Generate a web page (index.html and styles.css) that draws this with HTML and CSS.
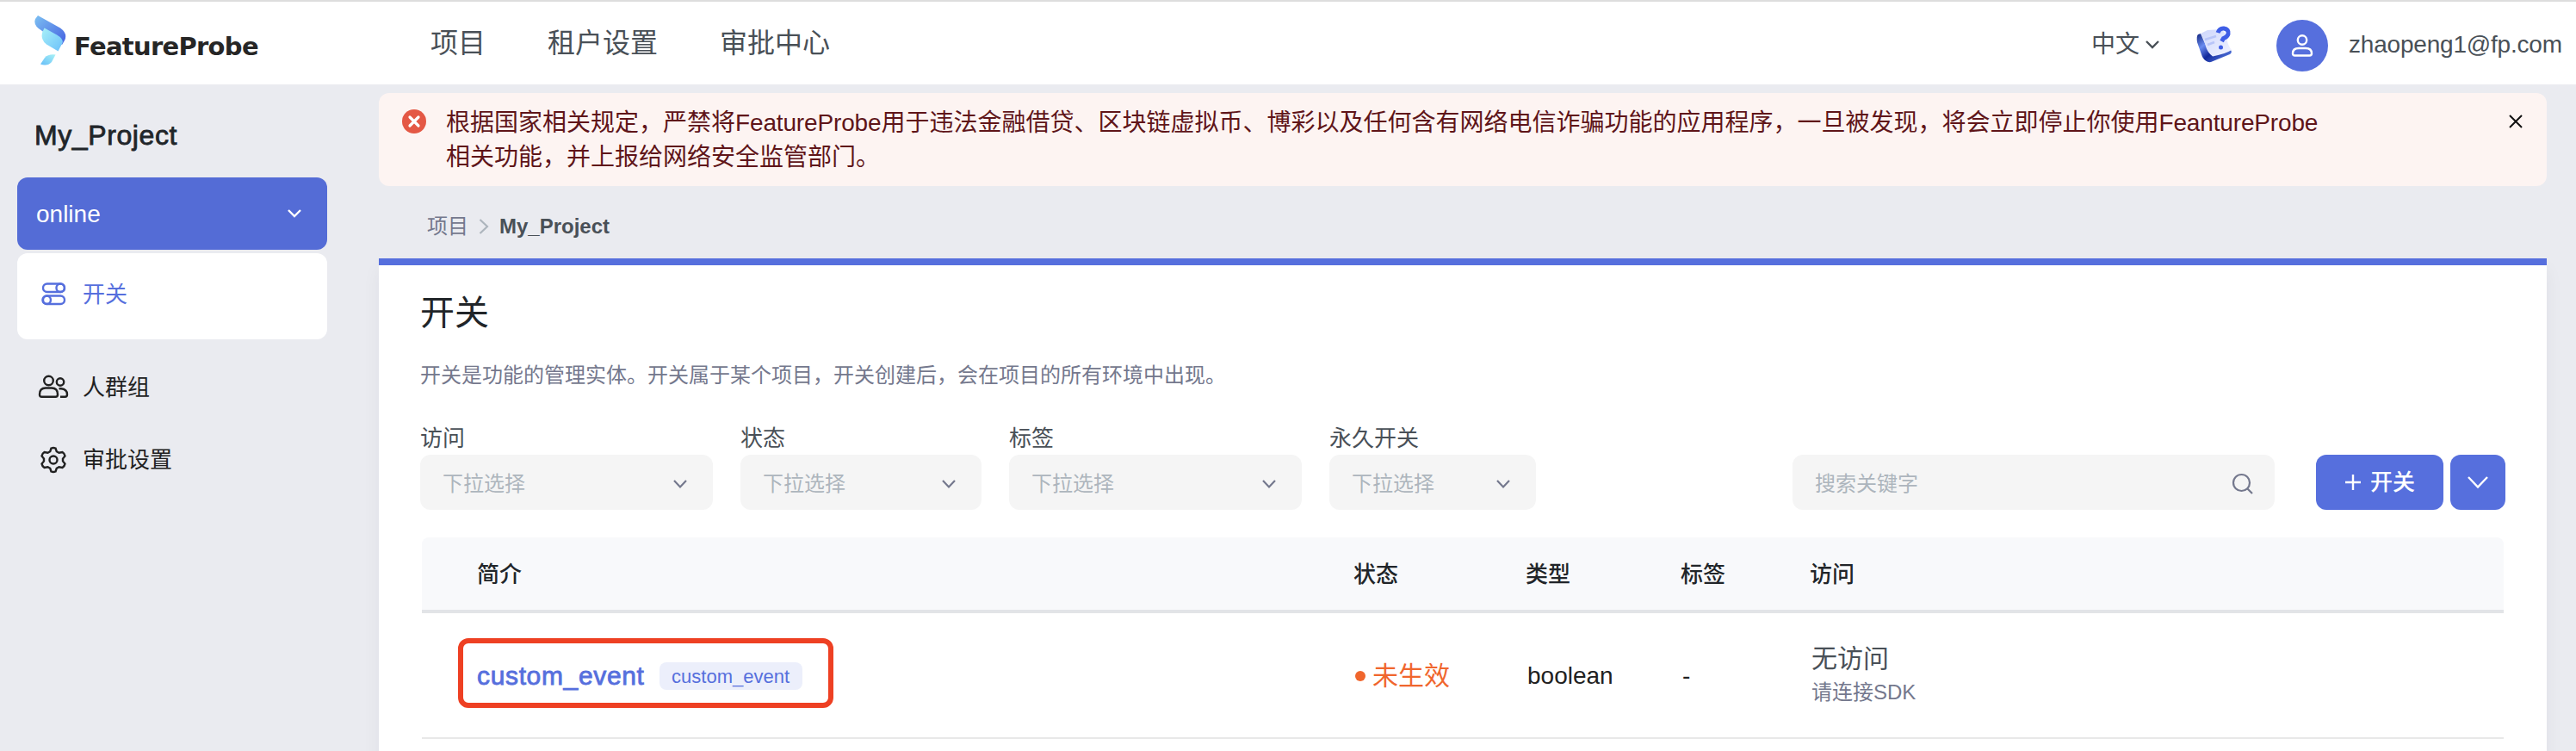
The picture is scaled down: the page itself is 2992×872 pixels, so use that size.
FILE: index.html
```
<!DOCTYPE html>
<html lang="zh-CN">
<head>
<meta charset="utf-8">
<title>FeatureProbe</title>
<link rel="stylesheet" href="styles.css">
</head>
<body>
<header class="header">
  <div class="logo">
    <svg class="logo-mark" width="37" height="60" viewBox="0 0 37 60">
      <defs>
        <linearGradient id="g1" x1="0" y1="0" x2="1" y2="1"><stop offset="0" stop-color="#7cc0f2"/><stop offset="1" stop-color="#4560e0"/></linearGradient>
        <linearGradient id="g2" x1="0" y1="0" x2="1" y2="1"><stop offset="0" stop-color="#a8f0f8"/><stop offset="1" stop-color="#6cc0fa"/></linearGradient>
        <linearGradient id="g3" x1="1" y1="0" x2="0" y2="1"><stop offset="0" stop-color="#a8f2f6"/><stop offset="1" stop-color="#66bdf8"/></linearGradient>
      </defs>
      <path d="M4 1L30 15.500Q39 22 35 30L32 35L9 19Q-2 13 1 5Z" fill="url(#g1)"/>
      <path d="M11.500 15.500L26 23.500Q34 28 32.500 33L27.500 42.500L14 34.500Q7 29 9 21Z" fill="url(#g2)"/>
      <path d="M24.500 46.500Q16 45.500 12 50L7 57.500Q15 60.500 20 55Z" fill="url(#g3)"/>
    </svg>
    <span class="logo-text">FeatureProbe</span>
  </div>
  <nav class="nav"><a>项目</a><a>租户设置</a><a>审批中心</a></nav>
  <div class="account">
    <span class="lang">中文</span>
    <svg class="lang-arrow" width="18" height="11" viewBox="0 0 18 11"><path d="M2 2L9 9L16 2"/></svg>
    <svg class="help" width="48" height="48" viewBox="0 0 48 48">
      <defs>
        <linearGradient id="h1" x1="0" y1="0" x2="1" y2="1"><stop offset="0" stop-color="#cdd6fc"/><stop offset="1" stop-color="#f2f4ff"/></linearGradient>
        <linearGradient id="h2" x1="0" y1="0" x2="1" y2="1"><stop offset="0" stop-color="#10247e"/><stop offset=".3" stop-color="#6a8cf0"/><stop offset=".55" stop-color="#12299a"/><stop offset="1" stop-color="#6a90f5"/></linearGradient>
      </defs>
      <path d="M3 12Q1 14 2 21L8 38Q12 45 18 44L40 35Q43 33 41 30L20 36Q15 33 13 27L6 11Z" fill="url(#h2)"/>
      <path d="M6 11L14 7L30 6Q35 10 36 15Q37 24 42 30Q36 34 20 37.500Q14 33 12 26Q10 17 6 11Z" fill="url(#h1)"/>
      <path d="M11 18L24 14M14 24L22 21" class="help-lines"/>
      <path d="M26 10Q28 4.500 33 5Q39 6 38 11.500Q37 15 32.500 16.500L30.500 20" class="help-q"/>
      <circle cx="29.500" cy="27" r="2.500" fill="#3f5ee6"/>
    </svg>
    <span class="avatar"><svg width="26" height="30" viewBox="0 0 26 30"><circle cx="13" cy="8.500" r="5.200"/><path d="M2 24Q2 18 9 18H17Q24 18 24 24Q24 26.500 21.500 26.500H4.500Q2 26.500 2 24Z"/></svg></span>
    <span class="email">zhaopeng1@fp.com</span>
  </div>
</header>
<div class="layout">
  <aside class="sidebar">
    <h2 class="project">My_Project</h2>
    <div class="env"><span>online</span><svg width="18" height="12" viewBox="0 0 18 12"><path d="M2 2L9 9L16 2"/></svg></div>
    <a class="item active"><svg width="36" height="36" viewBox="0 0 36 36"><rect x="6" y="5.500" width="25" height="9.500" rx="4.750"/><circle cx="26.200" cy="10.250" r="4.750"/><rect x="6" y="19.500" width="25" height="9.500" rx="4.750"/><circle cx="10.200" cy="24.250" r="4.750"/></svg><span>开关</span></a>
    <a class="item group"><svg width="36" height="36" viewBox="0 0 36 36"><circle cx="12.500" cy="10" r="5.300"/><circle cx="26" cy="11.500" r="4.200"/><path d="M2 26Q2 18.500 9 18.500H16Q23 18.500 23 26Q23 28.800 20.500 28.800H4.500Q2 28.800 2 26Z"/><path d="M24.500 19.300H27Q34 20 34 26Q34 28.800 31.500 28.800H26"/></svg><span>人群组</span></a>
    <a class="item approve"><svg width="36" height="36" viewBox="0 0 36 36"><path d="M15.500 4.500Q18 3.500 20.500 4.500L21.800 8.300L24.500 9.800L28.500 9Q31 10.500 31.500 13.500L29 16.600V19.400L31.500 22.500Q31 25.500 28.500 27L24.500 26.200L21.800 27.700L20.500 31.500Q18 32.500 15.500 31.500L14.200 27.700L11.500 26.200L7.500 27Q5 25.500 4.500 22.500L7 19.400V16.600L4.500 13.500Q5 10.500 7.500 9L11.500 9.800L14.200 8.300Z"/><circle cx="18" cy="18" r="4.500"/></svg><span>审批设置</span></a>
  </aside>
  <main class="main">
    <div class="alert">
      <svg class="alert-icon" width="28" height="28" viewBox="0 0 28 28"><circle cx="14" cy="14" r="14" fill="#e45845"/><path d="M9 9L19 19M19 9L9 19" stroke="#fff" stroke-width="3.200" stroke-linecap="round"/></svg>
      <p class="alert-text">根据国家相关规定，严禁将<span>FeatureProbe</span>用于违法金融借贷、区块链虚拟币、博彩以及任何含有网络电信诈骗功能的应用程序，一旦被发现，将会立即停止你使用<span>FeantureProbe</span><br>相关功能，并上报给网络安全监管部门。</p>
      <svg class="close" width="18" height="18" viewBox="0 0 18 18"><path d="M2 2L16 16M16 2L2 16"/></svg>
    </div>
    <div class="crumbs"><span>项目</span><svg width="12" height="20" viewBox="0 0 12 20"><path d="M1.500 2L10 10L1.500 18"/></svg><b>My_Project</b></div>
    <section class="card">
      <h1 class="title">开关</h1>
      <p class="desc">开关是功能的管理实体。开关属于某个项目，开关创建后，会在项目的所有环境中出现。</p>
      <div class="filters">
        <div class="field wide"><label>访问</label><div class="select"><span>下拉选择</span><svg width="18" height="12" viewBox="0 0 18 12"><path d="M2 2L9 9.500L16 2"/></svg></div></div>
        <div class="field mid"><label>状态</label><div class="select"><span>下拉选择</span><svg width="18" height="12" viewBox="0 0 18 12"><path d="M2 2L9 9.500L16 2"/></svg></div></div>
        <div class="field wide"><label>标签</label><div class="select"><span>下拉选择</span><svg width="18" height="12" viewBox="0 0 18 12"><path d="M2 2L9 9.500L16 2"/></svg></div></div>
        <div class="field small"><label>永久开关</label><div class="select"><span>下拉选择</span><svg width="18" height="12" viewBox="0 0 18 12"><path d="M2 2L9 9.500L16 2"/></svg></div></div>
        <div class="search"><span>搜索关键字</span><svg width="26" height="26" viewBox="0 0 26 26"><circle cx="11.500" cy="11.500" r="9.500"/><path d="M18.500 18.500L24 24"/></svg></div>
        <button class="btn add"><svg width="20" height="20" viewBox="0 0 20 20"><path d="M10 1V19M1 10H19"/></svg><span>开关</span></button>
        <button class="btn more"><svg width="26" height="16" viewBox="0 0 26 16"><path d="M2 2L13 13.500L24 2"/></svg></button>
      </div>
      <div class="table">
        <div class="row head"><span>简介</span><span>状态</span><span>类型</span><span>标签</span><span>访问</span></div>
        <div class="row body">
          <div class="name"><a>custom_event</a><span class="tag">custom_event</span><i class="mark"></i></div>
          <div class="status"><i></i><span>未生效</span></div>
          <div class="kind">boolean</div>
          <div class="kind">-</div>
          <div class="visit"><span>无访问</span><small>请连接SDK</small></div>
        </div>
      </div>
    </section>
  </main>
</div>
</body>
</html>
```
FILE: styles.css
```
* { box-sizing: border-box; margin: 0; padding: 0; }
body { width: 2992px; height: 872px; overflow: hidden; background: #eaebf0; color: #212529; font: 28px/40px "Liberation Sans", "Noto Sans CJK SC", sans-serif; }
svg { display: block; flex: none; fill: none; }
span, a, label, b, small { white-space: nowrap; }
.header { display: flex; align-items: flex-start; height: 98px; border-top: 2px solid #ddd; background: #fff; color: #495057; }
.logo { display: flex; width: 500px; padding: 15px 0 0 40px; }
.logo-text { margin: 17px 0 0 9px; font: bold 29px/40px "DejaVu Sans", sans-serif; color: #262626; letter-spacing: -.7px; }
.nav { display: flex; gap: 72px; width: 1929px; padding-top: 24px; font-size: 32px; line-height: 48px; }
.account { display: flex; align-items: center; height: 100px; }
.lang-arrow { margin: -2px 0 0 6px; stroke: #495057; stroke-width: 2.4; }
.help { margin: 0 0 0 41px; }
.help-lines { stroke: #b8c5f8; stroke-width: 2.5; }
.help-q { stroke: #3f5ee6; stroke-width: 5; }
.avatar { display: flex; align-items: center; justify-content: center; width: 60px; height: 60px; margin: 2px 0 0 46px; border-radius: 50%; background: #566fdd; }
.avatar svg { stroke: #fff; stroke-width: 2.4; }
.email { margin-left: 24px; letter-spacing: -.2px; }
.layout { display: flex; height: 774px; }
.sidebar { width: 440px; padding: 0 60px 0 20px; }
.project { height: 108px; padding: 39px 0 0 20px; font-size: 32px; line-height: 40px; font-weight: 400; letter-spacing: .6px; -webkit-text-stroke: .8px #212529; }
.env { display: flex; align-items: center; justify-content: space-between; height: 84px; padding: 2px 29px 0 22px; border-radius: 12px; background: #546cd6; color: #fff; }
.env svg { margin-top: -2px; stroke: #fff; stroke-width: 2.4; }
.item { display: flex; align-items: center; gap: 16px; height: 84px; padding-left: 24px; font-size: 26px; color: #212121; }
.item svg { stroke: #212121; stroke-width: 2.4; }
.active { height: 100px; margin: 4px 0 14px; padding-bottom: 4px; border-radius: 12px; background: #fff; color: #566fdd; }
.active svg { stroke: #566fdd; }
.main { width: 2518px; padding-top: 10px; }
.alert { display: flex; height: 108px; padding: 15px 27px 0 27px; border-radius: 12px; background: #fdf4f2; color: #5f1519; }
.alert-icon { margin: 4px 23px 0 0; }
.alert-text { flex: 1; white-space: nowrap; }
.alert-text span { letter-spacing: -.15px; }
.close { margin-top: 9px; stroke: #111; stroke-width: 2; }
.crumbs { display: flex; align-items: center; height: 84px; padding: 10px 0 0 56px; font-size: 24px; color: #74788d; }
.crumbs svg { margin: 0 12px 0 12px; stroke: #adb5bd; stroke-width: 2.2; }
.crumbs b { color: #495057; }
.card { height: 600px; padding: 0 48px; border-top: 8px solid #566fdd; background: #fff; box-shadow: 0 12px 20px rgba(18, 38, 63, .05); }
.title { padding-top: 27px; font-size: 40px; line-height: 56px; font-weight: 400; }
.desc { margin-top: 25px; font-size: 24px; line-height: 40px; color: #74788d; }
.filters { display: flex; align-items: flex-end; margin-top: 32px; }
.field { display: flex; flex-direction: column; margin-right: 32px; }
.wide { width: 340px; } .mid { width: 280px; } .small { width: 240px; }
.field label { position: relative; top: 1px; font-size: 26px; line-height: 40px; color: #495057; }
.select, .search { display: flex; align-items: center; justify-content: space-between; height: 64px; padding: 3px 29px 0 26px; border-radius: 12px; background: #f5f5f5; font-size: 24px; color: #adb5bd; }
.select svg { stroke: #74788d; stroke-width: 2.2; }
.search { width: 560px; margin: 0 48px 0 266px; padding-right: 24px; }
.search svg { stroke: #74788d; stroke-width: 2.2; }
.btn { display: flex; align-items: center; justify-content: center; height: 64px; border: 0; border-radius: 12px; background: #566fdd; color: #fff; font: 500 26px/40px "Liberation Sans", "Noto Sans CJK SC", sans-serif; }
.btn svg { stroke: #fff; stroke-width: 2.4; }
.add { width: 148px; gap: 10px; margin-right: 8px; }
.more { width: 64px; }
.table { margin: 32px 2px 0; }
.row { display: grid; grid-template-columns: 1018px 200px 180px 150px 1fr; align-items: center; padding-left: 64px; }
.head { height: 88px; padding-top: 1px; border-bottom: 4px solid #e2e4e7; border-radius: 8px 8px 0 0; background: #f8f9fb; font-size: 26px; font-weight: 500; }
.body { height: 146px; padding-top: 2px; border-bottom: 2px solid #e8e8e8; }
.name { position: relative; display: flex; align-items: center; }
.name a { color: #566fdd; font-size: 30px; letter-spacing: .65px; -webkit-text-stroke: .8px #566fdd; }
.tag { margin-left: 17px; width: 166px; height: 32px; border-radius: 8px; background: #eceffb; color: #566fdd; font-size: 22px; line-height: 33px; text-align: center; }
.mark { position: absolute; left: -22px; top: -24px; width: 436px; height: 81px; border: 6px solid #ee4023; border-radius: 12px; }
.status { display: flex; align-items: center; gap: 8px; color: #f0662d; font-size: 30px; padding-left: 2px; }
.status i { width: 12px; height: 12px; border-radius: 50%; background: #f0662d; }
.kind { padding-left: 2px; color: #212121; }
.visit { display: flex; flex-direction: column; padding-left: 2px; color: #495057; font-size: 30px; line-height: 38px; }
.visit small { font-size: 24px; line-height: 40px; color: #74788d; }
```
